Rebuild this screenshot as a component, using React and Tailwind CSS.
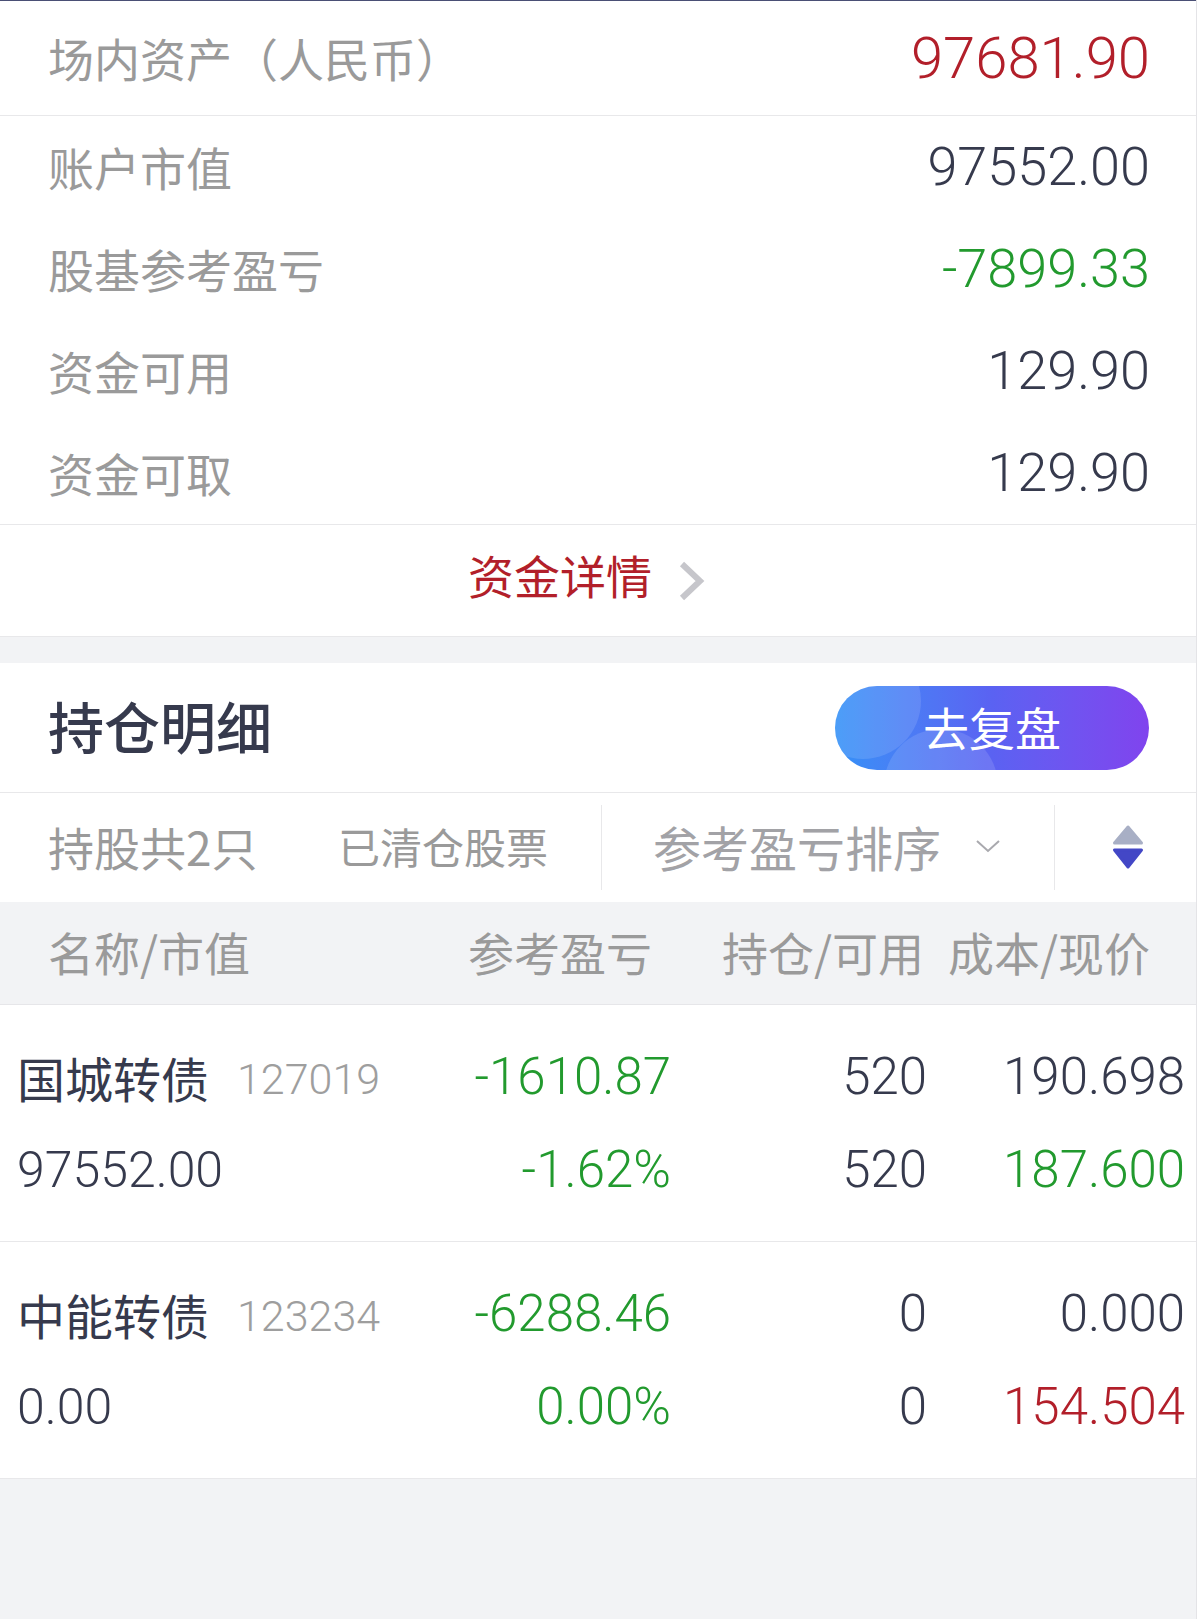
import React from "react";

const rows = [
  { label: "账户市值", value: "97552.00", color: "text-[#363a4d]" },
  { label: "股基参考盈亏", value: "-7899.33", color: "text-[#229a2e]" },
  { label: "资金可用", value: "129.90", color: "text-[#363a4d]" },
  { label: "资金可取", value: "129.90", color: "text-[#363a4d]" },
];

const holdings = [
  {
    name: "国城转债",
    code: "127019",
    mv: "97552.00",
    pl: "-1610.87",
    plp: "-1.62%",
    pos: "520",
    avail: "520",
    cost: "190.698",
    costColor: "text-[#363a4d]",
    price: "187.600",
    priceColor: "text-[#229a2e]",
  },
  {
    name: "中能转债",
    code: "123234",
    mv: "0.00",
    pl: "-6288.46",
    plp: "0.00%",
    pos: "0",
    avail: "0",
    cost: "0.000",
    costColor: "text-[#363a4d]",
    price: "154.504",
    priceColor: "text-[#b21f2a]",
  },
];

function SortIcon() {
  return (
    <svg width="32" height="47" viewBox="0 0 32 47">
      <polygon points="16,3 29.5,19 2.5,19" fill="#a8afc5" stroke="#a8afc5" strokeWidth="3" strokeLinejoin="round" />
      <polygon points="2.5,26 29.5,26 16,43" fill="#4347c6" stroke="#4347c6" strokeWidth="3" strokeLinejoin="round" />
    </svg>
  );
}

export default function App() {
  return (
    <div className="w-[1200px] min-h-[1619px] bg-white flex">
      <div className="w-[1197px] min-h-[1619px] bg-[#f2f3f5] border-r border-[#e4e4e7] flex flex-col">
        <div className="h-px bg-[#4a4f75]" />

        {/* Assets */}
        <div className="bg-white">
          <div className="h-[115px] flex items-center justify-between pl-[48px] pr-[46px] border-b border-[#e8e8ea]">
            <span className="mb-[3px] font-['Noto_Sans_CJK_SC',sans-serif] text-[46px] leading-none text-[#9a9a9a]">场内资产（人民币）</span>
            <span className="font-['Roboto',sans-serif] font-light text-[58px] leading-none text-[#b21f2a]">97681.90</span>
          </div>
          {rows.map((r) => (
            <div key={r.label} className="h-[102px] flex items-center justify-between pl-[48px] pr-[46px]">
              <span className="mb-[3px] font-['Noto_Sans_CJK_SC',sans-serif] text-[46px] leading-none text-[#9a9a9a]">{r.label}</span>
              <span className={"font-['Roboto',sans-serif] font-light text-[54px] leading-none " + r.color}>{r.value}</span>
            </div>
          ))}
          <div className="h-[113px] border-t border-b border-[#e8e8ea] flex items-center justify-center">
            <span className="mb-[14px] font-['Noto_Sans_CJK_SC',sans-serif] text-[46px] leading-none text-[#b21f2a]">资金详情</span>
            <svg className="ml-[25px] mr-[23px]" width="28" height="40" viewBox="0 0 28 40">
              <polyline points="5,3 23,20 5,37" fill="none" stroke="#c6c6cb" strokeWidth="6" strokeLinejoin="miter" />
            </svg>
          </div>
        </div>

        <div className="h-[26px]" />

        {/* Holdings header */}
        <div className="bg-white">
          <div className="h-[130px] flex items-center justify-between pl-[48px] pr-[47px] border-b border-[#e8e8ea]">
            <span className="mb-[6px] font-['Noto_Sans_CJK_SC',sans-serif] text-[56px] font-medium leading-none text-[#363a4d]">持仓明细</span>
            <div className="relative w-[314px] h-[84px] rounded-full overflow-hidden bg-linear-to-r from-[#3391f7] via-[#5a62f2] to-[#8043ee] flex items-center justify-center">
              <div className="absolute -left-[30px] -top-[43px] w-[116px] h-[116px] rounded-full bg-white/12" />
              <div className="absolute left-[49px] top-[43px] w-[114px] h-[114px] rounded-full bg-white/12" />
              <span className="relative mb-[4px] font-['Noto_Sans_CJK_SC',sans-serif] text-[46px] leading-none text-white">去复盘</span>
            </div>
          </div>

          {/* Filter row */}
          <div className="h-[109px] flex items-center">
            <div className="w-[601px] flex items-center pl-[48px] mb-[4px]">
              <span className="w-[290px] font-['Noto_Sans_CJK_SC',sans-serif] text-[46px] leading-none text-[#9a9a9a]">持股共2只</span>
              <span className="font-['Noto_Sans_CJK_SC',sans-serif] text-[42px] leading-none text-[#9a9a9a]">已清仓股票</span>
            </div>
            <div className="w-px h-[85px] bg-[#e8e8ea]" />
            <div className="w-[452px] flex items-center pl-[51px] mb-[4px]">
              <span className="font-['Noto_Sans_CJK_SC',sans-serif] text-[48px] leading-none text-[#a2a2a6]">参考盈亏排序</span>
              <svg className="ml-[33px]" width="28" height="16" viewBox="0 0 28 16">
                <polyline points="3,3 14,13 25,3" fill="none" stroke="#a9a9ae" strokeWidth="2" />
              </svg>
            </div>
            <div className="w-px h-[85px] bg-[#e8e8ea]" />
            <div className="flex-1 flex items-center justify-center pl-[4px]">
              <SortIcon />
            </div>
          </div>
        </div>

        {/* Table header */}
        <div className="h-[103px] border-b border-[#e6e6e9] flex items-center font-['Noto_Sans_CJK_SC',sans-serif] text-[46px] leading-none text-[#9a9a9a]">
          <span className="w-[452px] pl-[48px] mb-[4px]">名称/市值</span>
          <span className="w-[200px] text-right mb-[4px]">参考盈亏</span>
          <span className="w-[272px] text-right mb-[4px]">持仓/可用</span>
          <span className="w-[226px] text-right mb-[4px]">成本/现价</span>
        </div>

        {/* Rows */}
        {holdings.map((h) => (
          <div key={h.code} className="h-[237px] bg-white border-b border-[#e8e8ea] flex flex-col justify-center">
            <div className="h-[93px] flex items-center">
              <div className="w-[440px] pl-[17px] flex items-center">
                <span className="font-['Noto_Sans_CJK_SC',sans-serif] text-[48px] leading-none text-[#363a4d]">{h.name}</span>
                <span className="ml-[28px] mt-[6px] font-['Roboto',sans-serif] font-light text-[43px] leading-none text-[#9e9e9e]">{h.code}</span>
              </div>
              <span className="w-[231px] text-right font-['Roboto',sans-serif] font-light text-[51px] leading-none text-[#229a2e]">{h.pl}</span>
              <span className="w-[256px] text-right font-['Roboto',sans-serif] font-light text-[51px] leading-none text-[#363a4d]">{h.pos}</span>
              <span className={"w-[258px] text-right font-['Roboto',sans-serif] font-light text-[51px] leading-none " + h.costColor}>{h.cost}</span>
            </div>
            <div className="h-[93px] flex items-center">
              <div className="w-[440px] pl-[17px]">
                <span className="font-['Roboto',sans-serif] font-light text-[50px] leading-none text-[#363a4d]">{h.mv}</span>
              </div>
              <span className="w-[231px] text-right font-['Roboto',sans-serif] font-light text-[51px] leading-none text-[#229a2e]">{h.plp}</span>
              <span className="w-[256px] text-right font-['Roboto',sans-serif] font-light text-[51px] leading-none text-[#363a4d]">{h.avail}</span>
              <span className={"w-[258px] text-right font-['Roboto',sans-serif] font-light text-[51px] leading-none " + h.priceColor}>{h.price}</span>
            </div>
          </div>
        ))}
      </div>
    </div>
  );
}
